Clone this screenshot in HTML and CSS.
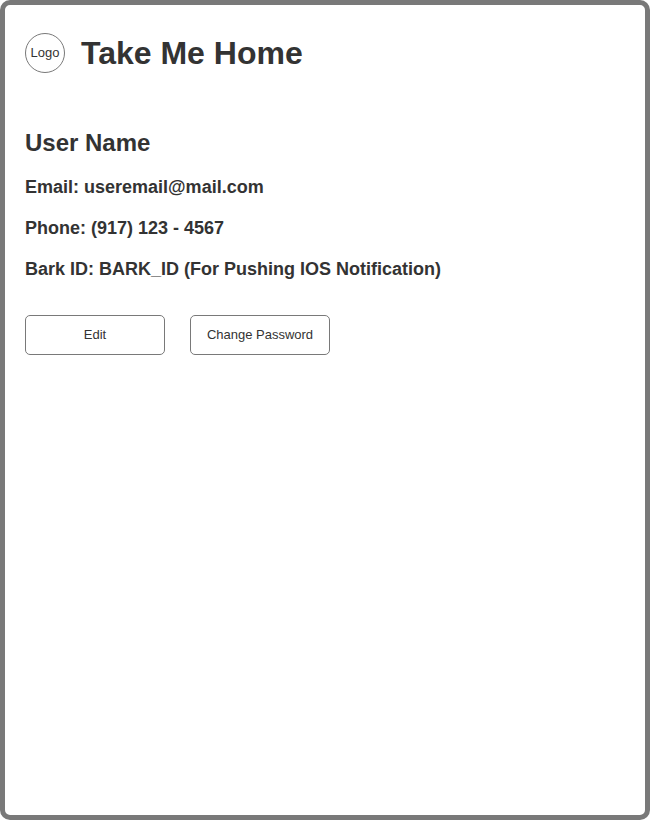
FILE: index.html
```html
<!DOCTYPE html>
<html lang="en">
<head>
<meta charset="utf-8">
<title>Take Me Home</title>
<link rel="stylesheet" href="styles.css">
</head>
<body>
<div class="frame">
  <header class="header">
    <div class="logo">Logo</div>
    <h1 class="title">Take Me Home</h1>
  </header>
  <main class="profile">
    <h2 class="name">User Name</h2>
    <p class="detail">Email: useremail@mail.com</p>
    <p class="detail">Phone: (917) 123 - 4567</p>
    <p class="detail">Bark ID: BARK_ID (For Pushing IOS Notification)</p>
    <div class="actions">
      <button class="button" type="button">Edit</button>
      <button class="button" type="button">Change Password</button>
    </div>
  </main>
</div>
</body>
</html>
```
FILE: styles.css
```css
* {
  box-sizing: border-box;
}

body {
  margin: 0;
  background: #fff;
  color: #333;
  font-family: "Liberation Sans", Arial, sans-serif;
}

.frame {
  min-height: 100vh;
  padding: 28px 20px;
  border: 5px solid #797979;
  border-radius: 10px;
}

.header {
  display: flex;
  align-items: center;
  gap: 16px;
  margin-bottom: 56px;
}

.logo {
  display: flex;
  align-items: center;
  justify-content: center;
  width: 40px;
  height: 40px;
  flex: none;
  padding-bottom: 2px;
  border: 1px solid #797979;
  border-radius: 50%;
  font-size: 13px;
}

.title {
  margin: 0;
  font-size: 32px;
  line-height: 40px;
}

.name {
  margin: 0 0 20px;
  font-size: 24px;
  line-height: 28px;
}

.detail {
  margin: 0 0 21px;
  font-size: 18px;
  font-weight: bold;
  line-height: 20px;
}

.actions {
  display: flex;
  flex-wrap: wrap;
  gap: 25px;
  padding-top: 15px;
}

.button {
  width: 140px;
  height: 40px;
  padding: 0 0 2px;
  border: 1px solid #797979;
  border-radius: 5px;
  background: #fff;
  color: #333;
  font: 13px "Liberation Sans", Arial, sans-serif;
}
```
